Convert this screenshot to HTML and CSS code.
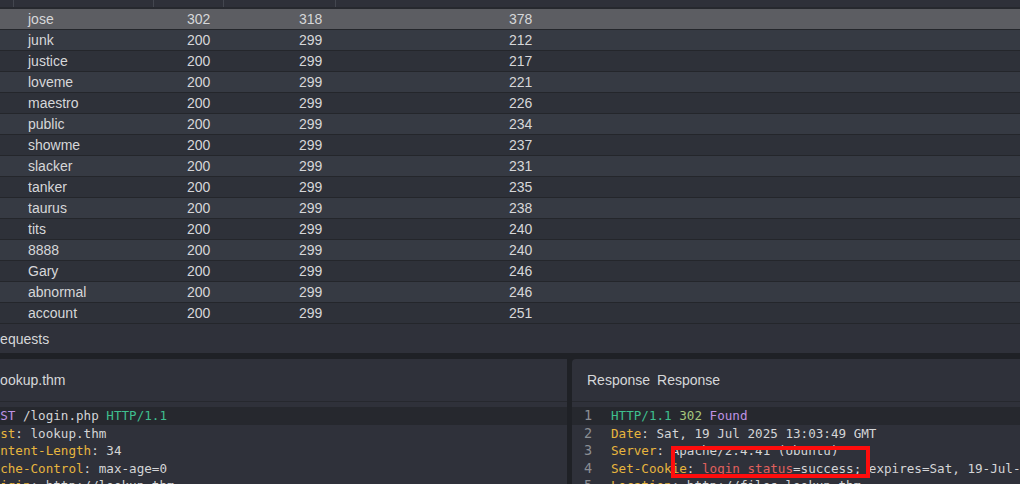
FILE: index.html
```html
<!DOCTYPE html>
<html>
<head>
<meta charset="utf-8">
<link rel="stylesheet" href="styles.css">
</head>
<body>
<div class="app">
  <div class="results">
    <div class="thead">
      <div class="th c0"></div>
      <div class="th c1"></div>
      <div class="th c2"></div>
      <div class="th c3"></div>
      <div class="th c4"></div>
    </div>
    <div class="row sel"><span class="pay">jose</span><span class="st">302</span><span class="len">318</span><span class="rt">378</span></div>
    <div class="row"><span class="pay">junk</span><span class="st">200</span><span class="len">299</span><span class="rt">212</span></div>
    <div class="row"><span class="pay">justice</span><span class="st">200</span><span class="len">299</span><span class="rt">217</span></div>
    <div class="row"><span class="pay">loveme</span><span class="st">200</span><span class="len">299</span><span class="rt">221</span></div>
    <div class="row"><span class="pay">maestro</span><span class="st">200</span><span class="len">299</span><span class="rt">226</span></div>
    <div class="row"><span class="pay">public</span><span class="st">200</span><span class="len">299</span><span class="rt">234</span></div>
    <div class="row"><span class="pay">showme</span><span class="st">200</span><span class="len">299</span><span class="rt">237</span></div>
    <div class="row"><span class="pay">slacker</span><span class="st">200</span><span class="len">299</span><span class="rt">231</span></div>
    <div class="row"><span class="pay">tanker</span><span class="st">200</span><span class="len">299</span><span class="rt">235</span></div>
    <div class="row"><span class="pay">taurus</span><span class="st">200</span><span class="len">299</span><span class="rt">238</span></div>
    <div class="row"><span class="pay">tits</span><span class="st">200</span><span class="len">299</span><span class="rt">240</span></div>
    <div class="row"><span class="pay">8888</span><span class="st">200</span><span class="len">299</span><span class="rt">240</span></div>
    <div class="row"><span class="pay">Gary</span><span class="st">200</span><span class="len">299</span><span class="rt">246</span></div>
    <div class="row"><span class="pay">abnormal</span><span class="st">200</span><span class="len">299</span><span class="rt">246</span></div>
    <div class="row last"><span class="pay">account</span><span class="st">200</span><span class="len">299</span><span class="rt">251</span></div>
  </div>
  <div class="status-bar"><span class="status-text">Requests</span></div>
  <div class="panes">
    <section class="pane left">
      <header class="pane-head"><span class="left-title">lookup.thm</span></header>
      <div class="editor">
        <div class="code-left">
          <div class="line cur"><span class="kw">POST</span> /login.php <span class="ver">HTTP/1.1</span></div>
          <div class="line"><span class="key">Host</span>: lookup.thm</div>
          <div class="line"><span class="key">Content-Length</span>: 34</div>
          <div class="line"><span class="key">Cache-Control</span>: max-age=0</div>
          <div class="line"><span class="key">Origin</span>: http://lookup.thm</div>
        </div>
      </div>
    </section>
    <section class="pane right">
      <header class="pane-head"><span>Response</span><span>Response</span></header>
      <div class="editor">
        <div class="line cur"><span class="ln">1</span><span class="ver">HTTP/1.1</span> <span class="num">302</span> <span class="kw">Found</span></div>
        <div class="line"><span class="ln">2</span><span class="key">Date</span>: Sat, 19 Jul 2025 13:03:49 GMT</div>
        <div class="line"><span class="ln">3</span><span class="key">Server</span>: Apache/2.4.41 (Ubuntu)</div>
        <div class="line"><span class="ln">4</span><span class="key">Set-Cookie</span>: <span class="ck">login_status</span>=success; expires=Sat, 19-Jul-2025 13:13:49 GMT</div>
        <div class="line"><span class="ln">5</span><span class="key">Location</span>: http://files.lookup.thm</div>
      </div>
      <div class="highlight-box"></div>
    </section>
  </div>
</div>
</body>
</html>
```
FILE: styles.css
```css
* { box-sizing: border-box; }
html, body {
  margin: 0;
  padding: 0;
  background: #1f2126;
  overflow: hidden;
}
.app {
  width: 1020px;
  height: 484px;
  display: flex;
  flex-direction: column;
  overflow: hidden;
  font-family: "Liberation Sans", Arial, sans-serif;
  font-size: 14px;
  color: #d6d7d9;
}
.results {
  display: flex;
  flex-direction: column;
}
.thead {
  display: flex;
  height: 9px;
  background: #2e3039;
  border-bottom: 2px solid #26282e;
}
.th { border-right: 1px solid #43464f; height: 7px; }
.c0 { width: 14px; }
.c1 { width: 140px; }
.c2 { width: 70px; }
.c3 { width: 112px; }
.c4 { flex: 1; border-right: none; }
.row {
  display: grid;
  grid-template-columns: 159px 112px 210px 1fr;
  height: 21px;
  line-height: 20px;
  padding-left: 28px;
  border-bottom: 1px solid #24262b;
  background: #2e3139;
}
.row:nth-child(odd) { background: #363a43; }
.row.sel { background: #5c5d62; }
.status-bar {
  height: 29px;
  background: #2f313a;
  line-height: 30px;
  overflow: hidden;
  white-space: nowrap;
}
.status-text { display: inline-block; margin-left: -10px; }
.panes {
  margin-top: 6px;
  flex: 1;
  display: flex;
  gap: 5px;
  min-height: 0;
}
.pane {
  position: relative;
  background: #2f313a;
  overflow: hidden;
  display: flex;
  flex-direction: column;
}
.pane.left { width: 567px; }
.pane.right { flex: 1; border-top-left-radius: 4px; }
.pane-head {
  height: 43px;
  flex: none;
  border-bottom: 1px solid #26282e;
  display: flex;
  align-items: center;
  gap: 7px;
  white-space: nowrap;
}
.pane.right .pane-head { padding-left: 15px; }
.left-title { margin-left: -3px; }
.editor {
  padding-top: 5px;
  font-family: "DejaVu Sans Mono", monospace;
  font-size: 12.6px;
  color: #d4d5d7;
  white-space: nowrap;
}
.code-left { margin-left: -15px; }
.line { height: 17.6px; line-height: 17.6px; white-space: pre; }
.line.cur { background: #26282e; }
.ln {
  display: inline-block;
  width: 39px;
  padding-left: 12px;
  color: #8b8e94;
  font-size: 13.5px;
}
.kw { color: #bf93e4; }
.ver { color: #3fbf8f; }
.num { color: #a7c97d; }
.key { color: #e7b53e; }
.ck { color: #e0605d; }
.highlight-box {
  position: absolute;
  left: 99px;
  top: 87px;
  width: 199px;
  height: 32px;
  border: 4px solid #ff0d0d;
}
```
